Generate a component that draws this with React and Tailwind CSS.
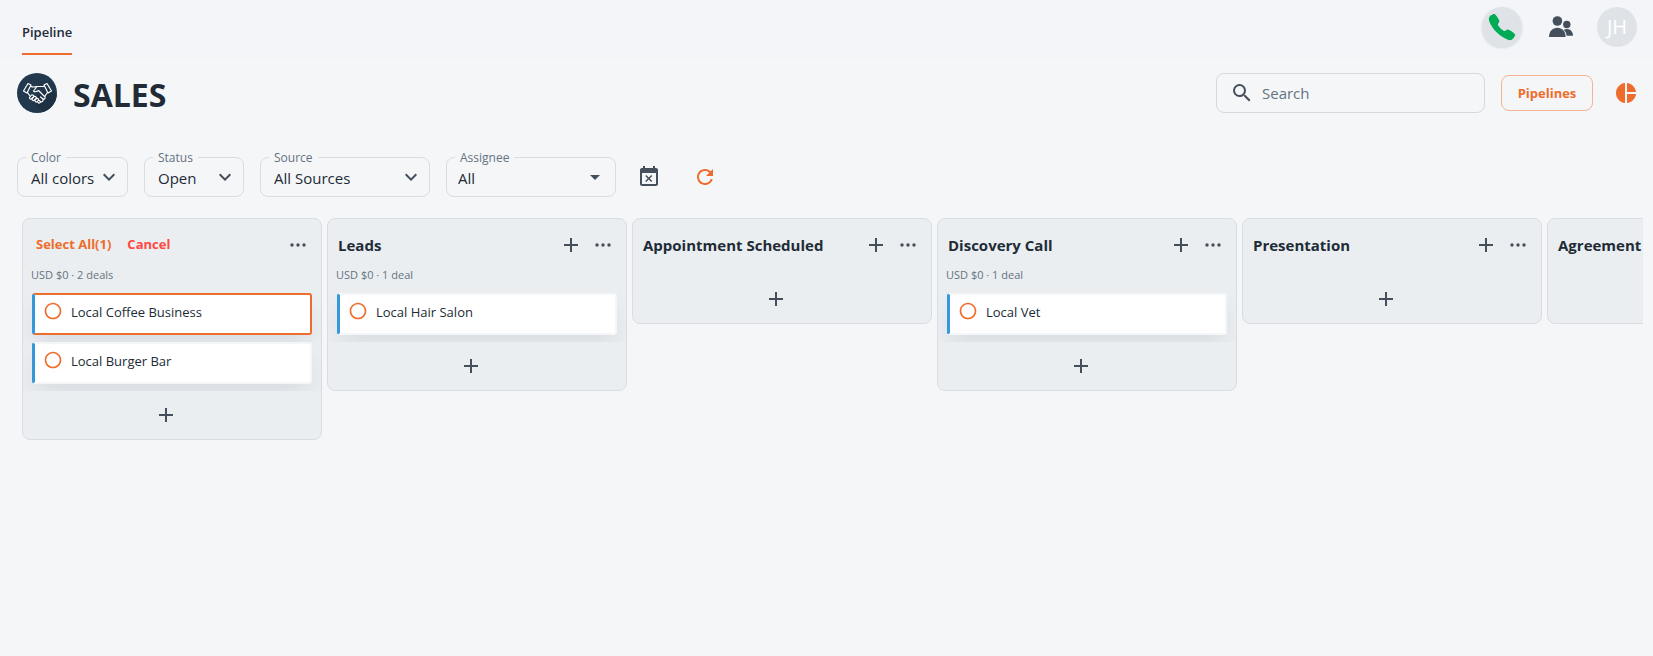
import {
  MdAdd,
  MdArrowDropDown,
  MdEventBusy,
  MdKeyboardArrowDown,
  MdPieChart,
  MdRadioButtonUnchecked,
  MdRefresh,
  MdSearch,
} from "react-icons/md";
import { IoCall } from "react-icons/io5";
import clsx from "clsx";

const filters = [
  { id: "color", label: "Color", value: "All colors", width: "w-[111px]" },
  { id: "status", label: "Status", value: "Open", width: "w-[100px]" },
  { id: "source", label: "Source", value: "All Sources", width: "w-[170px]" },
  { id: "assignee", label: "Assignee", value: "All", width: "w-[170px]", caret: true },
];

const columns = [
  {
    name: "New",
    selecting: true,
    summary: "USD $0 · 2 deals",
    deals: [{ title: "Local Coffee Business", selected: true }, { title: "Local Burger Bar" }],
  },
  { name: "Leads", summary: "USD $0 · 1 deal", deals: [{ title: "Local Hair Salon" }] },
  { name: "Appointment Scheduled", deals: [] },
  { name: "Discovery Call", summary: "USD $0 · 1 deal", deals: [{ title: "Local Vet" }] },
  { name: "Presentation", deals: [] },
  { name: "Agreement", deals: [] },
];

export default function App() {
  return (
    <div className="min-h-screen bg-[#f5f6f8] font-['Open_Sans','Noto_Sans',sans-serif] text-[#212b36]">
      <TopBar />
      <PageHeader />
      <Filters />
      <main className="mr-[10px] flex items-start gap-[5px] overflow-hidden pt-[21px] pl-[22px]">
        {columns.map((column) => (
          <Column key={column.name} column={column} />
        ))}
      </main>
    </div>
  );
}

function TopBar() {
  return (
    <header className="flex h-[59px] items-start justify-between bg-[#f3f5f9] pr-4 pl-[22px]">
      <nav>
        <a
          href="#pipeline"
          className="flex h-[55px] items-center border-b-2 border-[#ee6c2c] pt-3 text-[13px] font-semibold"
        >
          Pipeline
        </a>
      </nav>
      <div className="flex items-center pt-[7px]">
        <button
          type="button"
          aria-label="Call"
          className="flex size-10 items-center justify-center rounded-full bg-[#dfe3e8] text-[#00ab55] shadow"
        >
          <IoCall size={30} />
        </button>
        <button type="button" aria-label="Contacts" className="mr-6 ml-[27px] text-[#454f5b]">
          <PeopleIcon />
        </button>
        <button
          type="button"
          className="size-10 rounded-full bg-[#dfe3e8] text-[20px] text-white"
        >
          JH
        </button>
      </div>
    </header>
  );
}

function PageHeader() {
  return (
    <div className="flex items-center justify-between pt-[14px] pr-[15px] pl-[17px]">
      <div className="flex items-center gap-4">
        <HandshakeIcon />
        <h1 className="pt-1 text-[32px] leading-9 font-bold">SALES</h1>
      </div>
      <div className="flex items-center">
        <label
          htmlFor="search"
          className="flex h-10 w-[269px] items-center gap-2 rounded-lg border border-[#d5dade] px-[13px]"
        >
          <MdSearch size={24} className="shrink-0 text-[#454f5b]" />
          <input
            id="search"
            type="search"
            placeholder="Search"
            className="w-full min-w-0 bg-transparent pt-px text-[15px] outline-none placeholder:text-[#637381]"
          />
        </label>
        <button
          type="button"
          className="mr-[21px] ml-4 h-9 w-[92px] rounded-lg border border-[#f5b493] pt-px text-[13px] font-bold text-[#ee6c2c]"
        >
          Pipelines
        </button>
        <button type="button" aria-label="Reports" className="text-[#ee6c2c]">
          <MdPieChart size={24} />
        </button>
      </div>
    </div>
  );
}

function Filters() {
  return (
    <div className="flex items-center gap-4 pt-[44px] pl-[17px]">
      {filters.map((filter) => (
        <Filter key={filter.id} {...filter} />
      ))}
      <button type="button" aria-label="Clear dates" className="ml-[5px] text-[#454f5b]">
        <MdEventBusy size={24} />
      </button>
      <button type="button" aria-label="Refresh" className="ml-4 text-[#ee6c2c]">
        <MdRefresh size={24} />
      </button>
    </div>
  );
}

function Filter({ id, label, value, width, caret }) {
  const Arrow = caret ? MdArrowDropDown : MdKeyboardArrowDown;

  return (
    <div className={clsx("relative h-10 rounded-lg border border-[#d9dde1]", width)}>
      <label
        htmlFor={id}
        className="absolute -top-2 left-2 bg-[#f5f6f8] px-[5px] text-[12px] leading-4 text-[#637381]"
      >
        {label}
      </label>
      <select
        id={id}
        className={clsx(
          "h-full w-full appearance-none bg-transparent pt-[2px] text-[15px] outline-none",
          caret ? "pl-[11px]" : "pl-[13px]"
        )}
      >
        <option>{value}</option>
      </select>
      <Arrow
        size={24}
        className={clsx(
          "pointer-events-none absolute top-[7px] text-[#454f5b]",
          caret ? "right-2" : "right-[6px]"
        )}
      />
    </div>
  );
}

function Column({ column }) {
  const { name, selecting, summary, deals } = column;

  return (
    <section className="w-[300px] shrink-0 rounded-lg border border-[#d9dde3] bg-[#ebeef1]">
      <div className="mb-1 flex h-[52px] items-center justify-between pr-[11px] pl-[10px]">
        {selecting ? (
          <div className="flex gap-4 pl-[3px] text-[13px] font-bold">
            <button type="button" className="text-[#ee6c2c]">
              Select All(1)
            </button>
            <button type="button" className="text-[#ff4842]">
              Cancel
            </button>
          </div>
        ) : (
          <h2 className="text-[15px] font-bold">{name}</h2>
        )}
        <div className="flex gap-2 text-[#454f5b]">
          {!selecting && (
            <button type="button" aria-label="Add deal">
              <MdAdd size={24} />
            </button>
          )}
          <button type="button" aria-label="Column menu">
            <DotsIcon />
          </button>
        </div>
      </div>
      {summary && (
        <p className="-mt-2 pb-[10px] pl-2 text-[11px] leading-4 text-[#637381]">{summary}</p>
      )}
      <ul>
        {deals.map((deal) => (
          <Deal key={deal.title} deal={deal} />
        ))}
      </ul>
      <div className="flex h-12 items-center justify-center pr-3 text-[#454f5b]">
        <button type="button" aria-label={`Add to ${name}`}>
          <MdAdd size={24} />
        </button>
      </div>
    </section>
  );
}

function Deal({ deal }) {
  return (
    <li className="h-[49px] overflow-hidden px-[9px]">
      <div
        className={clsx(
          "flex h-[42px] rounded-[3px] border-2 bg-white shadow-[0_12px_24px_-4px_rgba(145,158,171,0.24)]",
          deal.selected ? "border-[#ee6c2c]" : "border-[#f5f6f8]",
          "border-l-[3px] border-l-[#3498db]"
        )}
      >
        <button
          type="button"
          aria-label={`Select ${deal.title}`}
          className="mr-2 ml-2 h-8 text-[#ee6c2c]"
        >
          <MdRadioButtonUnchecked size={20} />
        </button>
        <span className="text-[13px] leading-[34px]">{deal.title}</span>
      </div>
    </li>
  );
}

function DotsIcon() {
  return (
    <svg viewBox="0 0 24 24" className="size-6" fill="currentColor" aria-hidden="true">
      <circle cx="6" cy="12" r="1.700" />
      <circle cx="12" cy="12" r="1.700" />
      <circle cx="18" cy="12" r="1.700" />
    </svg>
  );
}

function PeopleIcon() {
  return (
    <svg viewBox="0 0 24 24" className="size-6" fill="currentColor" aria-hidden="true">
      <circle cx="8.400" cy="6" r="4.800" />
      <circle cx="17.800" cy="9.500" r="3.700" />
      <path d="M0 22C0 16.500 3.500 12.800 8.400 12.800S16.600 16.500 16.600 22Z" />
      <path d="M14.700 14.800C20 12.500 24 15.800 24 20.800H17.600C17.400 18.300 16.400 16.300 14.700 14.800Z" />
    </svg>
  );
}

function HandshakeIcon() {
  return (
    <svg viewBox="0 0 40 40" className="size-10" aria-hidden="true">
      <circle cx="20" cy="20" r="20" fill="#22394d" />
      <path d="M14 26 26.500 38.900A20 20 0 0 0 39.900 22L33 15Z" fill="#1e3142" />
      <g fill="none" stroke="#fff" strokeWidth="1.200" strokeLinejoin="round" strokeLinecap="round">
        <path d="M11 10.500 14 12 10 20 6.500 18Z" />
        <path d="M30 10.500 27 12 31 20 34.500 18Z" />
        <path d="M14 13.500C17 14.500 18 14 20 13.500L26.500 13.500" />
        <path d="M20 13.500 16.500 18C18 19.500 20 18.500 21.500 17.500L28 24C28.500 26 27 26.500 26 26" />
        <path d="M30.500 19.500 28 23M10.500 19.500 13 23" />
        <path d="M14.500 22 12.500 24.500C12.500 26 14 26.500 15 25.500L17 23.500C16.500 22 15.500 21.500 14.500 22Z" />
        <path d="M17 23.500 15 26C15 27.500 16.500 28 17.500 27L19.500 25C19 23.500 18 23 17 23.500Z" />
        <path d="M19.500 25.500 18 27.500C18 29 19.500 29.500 20.500 28.500L21.500 27C21.500 25.500 20.500 25 19.500 25.500Z" />
        <path d="M21 29.500C22 30.500 23.500 30 23.500 28.500L21.500 27M23.500 28.500C25 29.500 26.500 28 26 26L23.500 24" />
      </g>
    </svg>
  );
}
